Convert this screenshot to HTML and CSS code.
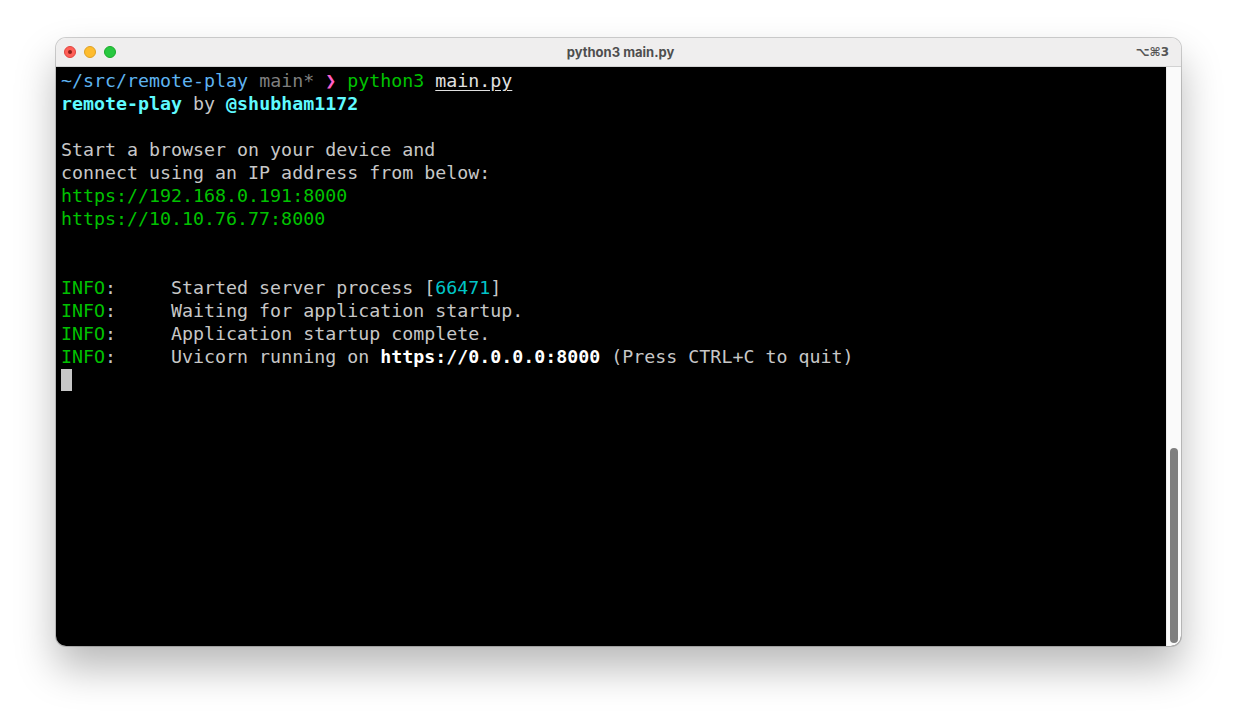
FILE: index.html
```html
<!DOCTYPE html>
<html lang="en">

<head>
    <meta charset="UTF-8">
    <meta name="viewport" content="width=device-width, initial-scale=1.0">
    <title>python3 main.py</title>
    <link rel="stylesheet" href="styles.css">
</head>

<body>
    <div class="window">
        <!-- TITLE BAR -->
        <div class="titlebar">
            <div class="lights">
                <span class="light red"></span>
                <span class="light yellow"></span>
                <span class="light green"></span>
            </div>
            <div class="title">python3 main.py</div>
            <div class="shortcut">⌥⌘3</div>
        </div>

        <!-- TERMINAL -->
        <div class="term">
            <div class="screen">
                <div class="line"><span class="path">~/src/remote-play</span> <span class="branch">main*</span> <span class="prompt">❯</span> <span class="cmd">python3</span> <span class="arg">main.py</span></div>
                <div class="line"><b class="cyan">remote-play</b> by <b class="cyan">@shubham1172</b></div>
                <div class="line"></div>
                <div class="line">Start a browser on your device and</div>
                <div class="line">connect using an IP address from below:</div>
                <div class="line green-text">https://192.168.0.191:8000</div>
                <div class="line green-text">https://10.10.76.77:8000</div>
                <div class="line"></div>
                <div class="line"></div>
                <div class="line"><span class="green-text">INFO</span>:     Started server process [<span class="teal">66471</span>]</div>
                <div class="line"><span class="green-text">INFO</span>:     Waiting for application startup.</div>
                <div class="line"><span class="green-text">INFO</span>:     Application startup complete.</div>
                <div class="line"><span class="green-text">INFO</span>:     Uvicorn running on <b class="white">https://0.0.0.0:8000</b> (Press CTRL+C to quit)</div>
                <div class="line"><span class="cursor"></span></div>
            </div>
            <div class="scrollbar">
                <div class="thumb"></div>
            </div>
        </div>
    </div>
</body>

</html>
```

FILE: styles.css
```css
* {
    margin: 0;
    padding: 0;
    box-sizing: border-box;
}

body {
    width: 100%;
    height: 720px;
    overflow: hidden;
    background: #ffffff;
    padding: 38px 56px 0 56px;
}

.window {
    width: 1125px;
    height: 608px;
    border-radius: 10px;
    overflow: hidden;
    display: flex;
    flex-direction: column;
    box-shadow: 0 0 0 1px rgba(0, 0, 0, 0.18), 0 22px 40px rgba(0, 0, 0, 0.28);
}

.titlebar {
    flex-shrink: 0;
    height: 29px;
    background: #efeeee;
    border-bottom: 1px solid #d2d2d2;
    display: flex;
    align-items: center;
    justify-content: space-between;
    padding: 0 12px 0 8px;
    font-family: "Inter", "Liberation Sans", sans-serif;
    font-size: 13px;
    font-weight: 700;
    color: #4e4e4e;
}

.lights {
    display: flex;
    gap: 8px;
    width: 120px;
}

.light {
    width: 12px;
    height: 12px;
    border-radius: 50%;
    display: block;
}

.red {
    background: #fe5f57;
    border: 1px solid #e0443e;
    position: relative;
}

.red::after {
    content: '';
    position: absolute;
    left: 3px;
    top: 3px;
    width: 4px;
    height: 4px;
    border-radius: 50%;
    background: #8f1e19;
}

.yellow {
    background: #febc2e;
    border: 1px solid #dea123;
}

.green {
    background: #28c840;
    border: 1px solid #1aab29;
}

.title {
    flex: 1;
    text-align: center;
    margin-left: 8px;
}

.shortcut {
    width: 120px;
    text-align: right;
    font-family: "DejaVu Sans", sans-serif;
    font-size: 12px;
    color: #555;
}

.term {
    flex: 1;
    min-height: 0;
    display: flex;
    background: #000;
}

.screen {
    flex: 1;
    padding: 2px 0 0 5px;
    font-family: "DejaVu Sans Mono", monospace;
    font-size: 18.3px;
    line-height: 23px;
    color: #c7c7c7;
}

.line {
    height: 23px;
    white-space: pre;
}

.path {
    color: #5fb4f0;
}

.branch {
    color: #7f7f7f;
}

.prompt {
    color: #ff5fc8;
    font-weight: 700;
}

.cmd {
    color: #00c200;
}

.arg {
    color: #e0e0e0;
    text-decoration: underline;
    text-underline-offset: 3px;
}

.cyan {
    color: #5ffaff;
}

.green-text {
    color: #00c200;
}

.teal {
    color: #00c5c7;
}

.white {
    color: #ffffff;
}

.cursor {
    display: inline-block;
    width: 11px;
    height: 22px;
    background: #c7c7c7;
    vertical-align: -5px;
}

.scrollbar {
    width: 15px;
    background: #fafafa;
    border-left: 1px solid #ececec;
    display: flex;
    flex-direction: column;
    justify-content: flex-end;
    padding: 0 3px 3px 3px;
}

.thumb {
    height: 195px;
    border-radius: 4px;
    background: #7f7f7f;
}
```
